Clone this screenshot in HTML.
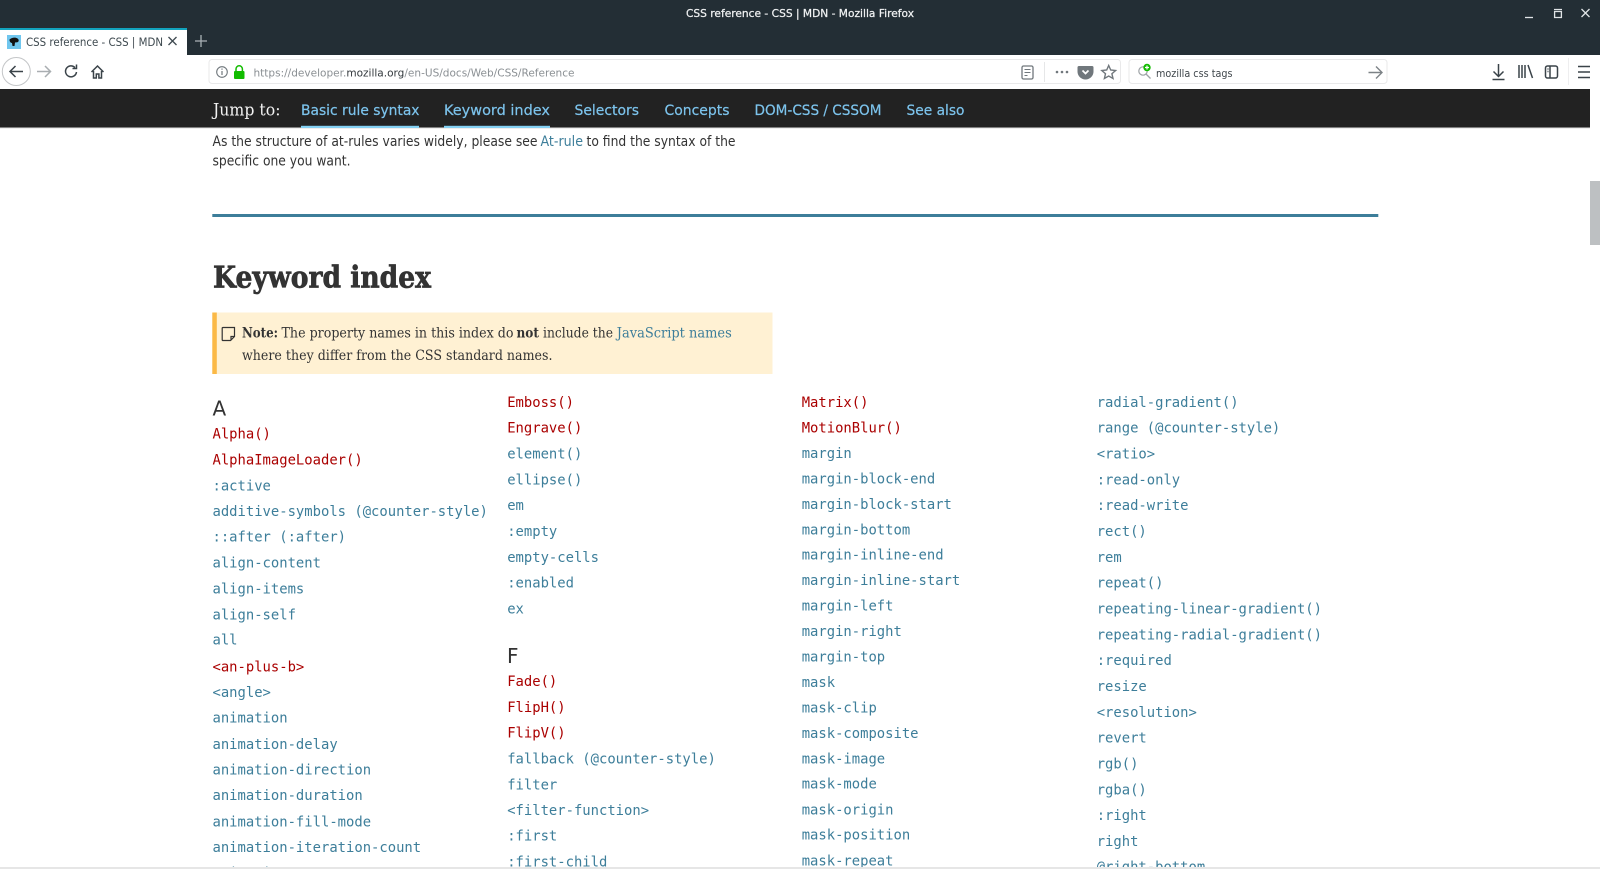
<!DOCTYPE html>
<html><head><meta charset="utf-8"><title>CSS reference - CSS | MDN - Mozilla Firefox</title>
<style>
html,body{margin:0;padding:0;background:#fff;width:1600px;height:869px;overflow:hidden}
svg{display:block;filter:blur(0.35px)}
text{white-space:pre}
.s{font-family:"Liberation Sans",sans-serif}
.d{font-family:"DejaVu Sans",sans-serif}
.sf{font-family:"DejaVu Serif",serif}
.m{font-family:"DejaVu Sans Mono",monospace;font-size:13.87px}
.b{fill:#3d7e9a}.r{fill:#a00}
.ic{fill:none;stroke:#3a4349;stroke-width:1.5}
</style></head><body>
<svg width="1600" height="869" viewBox="0 0 1600 869" xmlns="http://www.w3.org/2000/svg">
<rect width="1600" height="869" fill="#fff"/>
<!-- title bar -->
<rect width="1600" height="55" fill="#232e35"/>
<text class="d" x="686" y="17" font-size="11" fill="#f0f2f3" stroke="#f0f2f3" stroke-width="0.25" textLength="228" lengthAdjust="spacingAndGlyphs">CSS reference - CSS | MDN - Mozilla Firefox</text>
<path d="M1525 17.5h8" stroke="#e0e4e6" stroke-width="1.3"/>
<path d="M1554 9.5h8M1554.6 11.5h6.8v6h-6.8z" stroke="#e0e4e6" stroke-width="1.3" fill="none"/>
<path d="M1581.5 9l8 8M1589.5 9l-8 8" stroke="#e0e4e6" stroke-width="1.3"/>
<!-- tab -->
<rect x="0" y="29" width="187" height="26" fill="#fff"/>
<rect x="0" y="28" width="187" height="2" fill="#12a3bd"/>
<rect x="7" y="35" width="14" height="14" fill="#70c6ee"/>
<path d="M9.5 39.5c2-2 6-2.500 8-1 1.500 1 1.500 2.500.5 3.500-1 .5-2 .3-3 .5l-.5 3.500h-2l-.5-3c-1.500 0-2.500-1.500-2.500-3.500z" fill="#111"/>
<text class="d" x="26" y="46" font-size="11.500" fill="#3f4a50" textLength="137" lengthAdjust="spacingAndGlyphs">CSS reference - CSS | MDN</text>
<path d="M168.500 37l8 8M176.500 37l-8 8" stroke="#3f4a50" stroke-width="1.300"/>
<path d="M201 35v12M195 41h12" stroke="#aab2b6" stroke-width="1.300"/>
<!-- toolbar -->
<rect x="0" y="55" width="1600" height="34" fill="#fff"/>
<circle cx="16.300" cy="71.500" r="14" fill="#fff" stroke="#c4c6c8" stroke-width="1"/>
<path d="M23 71.500H10M15.500 66l-5.500 5.500 5.500 5.500" class="ic" stroke-width="1.600"/>
<path d="M37 71.500h13M45 66l5.500 5.500-5.500 5.500" fill="none" stroke="#a9aeb1" stroke-width="1.500"/>
<path d="M76.500 72a5.500 5.500 0 1 1-1.500-4.500M76.500 64.500v4h-4" class="ic" stroke-width="1.700"/>
<path d="M91.500 72l6-6 6 6M93.500 71v7h2.800v-4h2.600v4h2.600v-7" class="ic" stroke-width="1.600"/>
<rect x="209" y="59.500" width="911.500" height="24" rx="3" fill="#fff" stroke="#e9e9ea"/>
<rect x="1129" y="59.500" width="258" height="24" rx="3" fill="#fff" stroke="#e9e9ea"/>
<circle cx="222" cy="72" r="5.300" fill="none" stroke="#70777c" stroke-width="1.100"/>
<path d="M222 71v4M222 68.500v1.300" stroke="#70777c" stroke-width="1.200"/>
<rect x="234" y="71" width="10.500" height="8" rx="1" fill="#12bc00"/>
<path d="M236 71.500v-2.500a3.200 3.200 0 0 1 6.400 0v2.500" fill="none" stroke="#12bc00" stroke-width="1.500"/>
<text class="d" x="253.500" y="76.500" font-size="11" textLength="321" lengthAdjust="spacingAndGlyphs" fill="#8a8f93">https://developer.<tspan fill="#33393d">mozilla.org</tspan>/en-US/docs/Web/CSS/Reference</text>
<rect x="1022" y="66" width="11" height="13" rx="1.500" fill="none" stroke="#70777c" stroke-width="1.300"/>
<path d="M1024.500 69.500h6M1024.500 72.500h6M1024.500 75.500h3" stroke="#70777c" stroke-width="1"/>
<path d="M1044.500 62v20" stroke="#e6e7e8"/>
<circle cx="1057" cy="72" r="1.300" fill="#70777c"/><circle cx="1062" cy="72" r="1.300" fill="#70777c"/><circle cx="1067" cy="72" r="1.300" fill="#70777c"/>
<path d="M1079 66h13a1.500 1.500 0 0 1 1.500 1.500v4a8 8 0 0 1-16 0v-4a1.500 1.500 0 0 1 1.500-1.500z" fill="#70777c"/>
<path d="M1082.500 70.500l3 3 3-3" fill="none" stroke="#fff" stroke-width="1.700"/>
<path d="M1108.700 65.500l2 4.500 4.900.5-3.700 3.200 1.100 4.800-4.300-2.500-4.300 2.500 1.100-4.800-3.700-3.200 4.900-.5z" fill="none" stroke="#70777c" stroke-width="1.400"/>
<circle cx="1143" cy="71" r="4.200" fill="none" stroke="#9da2a6" stroke-width="1.200"/>
<path d="M1146 74l4.500 4.500" stroke="#9da2a6" stroke-width="1.300"/>
<circle cx="1147" cy="67.500" r="3.700" fill="#12bc00"/><path d="M1147 65.500v4M1145 67.500h4" stroke="#fff" stroke-width="1.200"/>
<text class="d" x="1156" y="77" font-size="11" fill="#3f464b" textLength="76.500" lengthAdjust="spacingAndGlyphs">mozilla css tags</text>
<path d="M1368.500 72.500h13M1376 66.500l6 6-6 6" fill="none" stroke="#7c8286" stroke-width="1.400"/>
<path d="M1498.500 64v12M1493.500 71.500l5 5 5-5M1492.500 79.500h12" class="ic"/>
<path d="M1519 65v13M1522 65v13M1525 65v13M1528 65l4.500 13" class="ic"/>
<rect x="1545.500" y="66" width="12" height="12" rx="2" class="ic"/><path d="M1550 66v12M1547.500 69h1M1547.500 71.500h1" class="ic" stroke-width="1"/>
<path d="M1568.500 58v27" stroke="#eeeeef"/>
<path d="M1578 66.500h12M1578 72h12M1578 77.500h12" class="ic"/>
<!-- nav -->
<rect x="0" y="89" width="1590" height="38.500" fill="#222"/>
<rect x="0" y="127.500" width="1590" height="1" fill="#ddd"/>
<text class="sf" x="213" y="115.500" font-size="16.500" fill="#f2f2f2" textLength="67.500" lengthAdjust="spacingAndGlyphs">Jump to:</text>
<g class="d" font-size="14" fill="#7cc3ec" stroke="#7cc3ec" stroke-width="0.2">
<text x="301" y="115" textLength="118.500" lengthAdjust="spacingAndGlyphs">Basic rule syntax</text>
<text x="444" y="115" textLength="106" lengthAdjust="spacingAndGlyphs">Keyword index</text>
<text x="574.500" y="115" textLength="64.500" lengthAdjust="spacingAndGlyphs">Selectors</text>
<text x="664.500" y="115" textLength="65" lengthAdjust="spacingAndGlyphs">Concepts</text>
<text x="754.500" y="115" textLength="127" lengthAdjust="spacingAndGlyphs">DOM-CSS / CSSOM</text>
<text x="906.500" y="115" textLength="58" lengthAdjust="spacingAndGlyphs">See also</text>
</g>
<rect x="301" y="125.800" width="118" height="2.200" fill="#83d0f2"/>
<rect x="444" y="125.800" width="106" height="2.200" fill="#83d0f2"/>
<!-- scrollbar -->
<rect x="1590" y="181" width="10" height="64" fill="#bdc0c2"/>
<!-- content -->
<g class="d" font-size="14" fill="#333">
<text x="212.500" y="146.100" textLength="325" lengthAdjust="spacingAndGlyphs">As the structure of at-rules varies widely, please see</text>
<text x="540.500" y="146.100" textLength="42.500" lengthAdjust="spacingAndGlyphs" class="b">At-rule</text>
<text x="586.500" y="146.100" textLength="149" lengthAdjust="spacingAndGlyphs">to find the syntax of the</text>
<text x="212.500" y="165.700" textLength="138" lengthAdjust="spacingAndGlyphs">specific one you want.</text>
</g>
<rect x="212.300" y="214" width="1166" height="3" fill="#3d7e9a"/>
<text class="sf" x="213" y="287.400" font-size="30" font-weight="bold" fill="#333" stroke="#333" stroke-width="0.7" textLength="218" lengthAdjust="spacingAndGlyphs">Keyword index</text>
<rect x="212.300" y="312.500" width="560.200" height="61.500" fill="#fff1d3"/>
<rect x="212.300" y="312.500" width="4.500" height="61.500" fill="#fbb946"/>
<path d="M223 327.500h11.500v9l-4 4h-7.500a.8.8 0 0 1-.8-.8v-11.400a.8.8 0 0 1 .8-.8zM234.500 336.500h-3.500v4" fill="none" stroke="#333" stroke-width="1.200"/>
<g class="sf" font-size="13.500" fill="#333">
<text x="242" y="337.300" font-weight="bold" textLength="36" lengthAdjust="spacingAndGlyphs">Note:</text>
<text x="281.500" y="337.300" textLength="232" lengthAdjust="spacingAndGlyphs">The property names in this index do</text>
<text x="516.500" y="337.300" font-weight="bold" textLength="22.500" lengthAdjust="spacingAndGlyphs">not</text>
<text x="543" y="337.300" textLength="70" lengthAdjust="spacingAndGlyphs">include the</text>
<text x="616.800" y="337.300" textLength="115" lengthAdjust="spacingAndGlyphs" class="b">JavaScript names</text>
<text x="242" y="360" textLength="310.500" lengthAdjust="spacingAndGlyphs">where they differ from the CSS standard names.</text>
</g>
<text class="d" x="212.500" y="415.700" font-size="20" fill="#333">A</text>
<text class="d" x="507" y="662.900" font-size="20" fill="#333">F</text>
<g class="m" transform="translate(0.2 0.3)">
<text x="212.300" y="438.300" class="r m">Alpha()</text>
<text x="212.300" y="464" class="r m">AlphaImageLoader()</text>
<text x="212.300" y="490.300" class="b m">:active</text>
<text x="212.300" y="515.800" class="b m">additive-symbols (@counter-style)</text>
<text x="212.300" y="541.400" class="b m">::after (:after)</text>
<text x="212.300" y="567" class="b m">align-content</text>
<text x="212.300" y="593.400" class="b m">align-items</text>
<text x="212.300" y="619" class="b m">align-self</text>
<text x="212.300" y="644.400" class="b m">all</text>
<text x="212.300" y="671" class="r m">&lt;an-plus-b&gt;</text>
<text x="212.300" y="696.500" class="b m">&lt;angle&gt;</text>
<text x="212.300" y="722" class="b m">animation</text>
<text x="212.300" y="748.500" class="b m">animation-delay</text>
<text x="212.300" y="774" class="b m">animation-direction</text>
<text x="212.300" y="799.500" class="b m">animation-duration</text>
<text x="212.300" y="826" class="b m">animation-fill-mode</text>
<text x="212.300" y="851.700" class="b m">animation-iteration-count</text>
<text x="212.300" y="877" class="b m">animation-name</text>

<text x="507" y="406.600" class="r m">Emboss()</text>
<text x="507" y="432.200" class="r m">Engrave()</text>
<text x="507" y="458.200" class="b m">element()</text>
<text x="507" y="484.200" class="b m">ellipse()</text>
<text x="507" y="509.700" class="b m">em</text>
<text x="507" y="535.700" class="b m">:empty</text>
<text x="507" y="561.700" class="b m">empty-cells</text>
<text x="507" y="587.300" class="b m">:enabled</text>
<text x="507" y="613.300" class="b m">ex</text>
<text x="507" y="685.700" class="r m">Fade()</text>
<text x="507" y="711.700" class="r m">FlipH()</text>
<text x="507" y="737.300" class="r m">FlipV()</text>
<text x="507" y="763.300" class="b m">fallback (@counter-style)</text>
<text x="507" y="789.300" class="b m">filter</text>
<text x="507" y="814.800" class="b m">&lt;filter-function&gt;</text>
<text x="507" y="840.400" class="b m">:first</text>
<text x="507" y="866.400" class="b m">:first-child</text>

<text x="801.500" y="406.600" class="r m">Matrix()</text>
<text x="801.500" y="432.200" class="r m">MotionBlur()</text>
<text x="801.500" y="457.700" class="b m">margin</text>
<text x="801.500" y="483.200" class="b m">margin-block-end</text>
<text x="801.500" y="508.700" class="b m">margin-block-start</text>
<text x="801.500" y="534.200" class="b m">margin-bottom</text>
<text x="801.500" y="559.200" class="b m">margin-inline-end</text>
<text x="801.500" y="584.800" class="b m">margin-inline-start</text>
<text x="801.500" y="610.300" class="b m">margin-left</text>
<text x="801.500" y="635.800" class="b m">margin-right</text>
<text x="801.500" y="661.200" class="b m">margin-top</text>
<text x="801.500" y="686.700" class="b m">mask</text>
<text x="801.500" y="712.200" class="b m">mask-clip</text>
<text x="801.500" y="737.800" class="b m">mask-composite</text>
<text x="801.500" y="763.300" class="b m">mask-image</text>
<text x="801.500" y="788.300" class="b m">mask-mode</text>
<text x="801.500" y="814.300" class="b m">mask-origin</text>
<text x="801.500" y="839.300" class="b m">mask-position</text>
<text x="801.500" y="865" class="b m">mask-repeat</text>

<text x="1096.500" y="406.600" class="b m">radial-gradient()</text>
<text x="1096.500" y="432.200" class="b m">range (@counter-style)</text>
<text x="1096.500" y="458.200" class="b m">&lt;ratio&gt;</text>
<text x="1096.500" y="484.200" class="b m">:read-only</text>
<text x="1096.500" y="509.700" class="b m">:read-write</text>
<text x="1096.500" y="535.700" class="b m">rect()</text>
<text x="1096.500" y="561.700" class="b m">rem</text>
<text x="1096.500" y="587.300" class="b m">repeat()</text>
<text x="1096.500" y="613.300" class="b m">repeating-linear-gradient()</text>
<text x="1096.500" y="639.300" class="b m">repeating-radial-gradient()</text>
<text x="1096.500" y="664.800" class="b m">:required</text>
<text x="1096.500" y="690.800" class="b m">resize</text>
<text x="1096.500" y="716.800" class="b m">&lt;resolution&gt;</text>
<text x="1096.500" y="742.400" class="b m">revert</text>
<text x="1096.500" y="768.400" class="b m">rgb()</text>
<text x="1096.500" y="794.400" class="b m">rgba()</text>
<text x="1096.500" y="819.900" class="b m">:right</text>
<text x="1096.500" y="845.900" class="b m">right</text>
<text x="1096.500" y="871" class="b m">@right-bottom</text>
</g>
<rect x="0" y="867" width="1600" height="2" fill="#e6e6e6"/>
</svg>
</body></html>
